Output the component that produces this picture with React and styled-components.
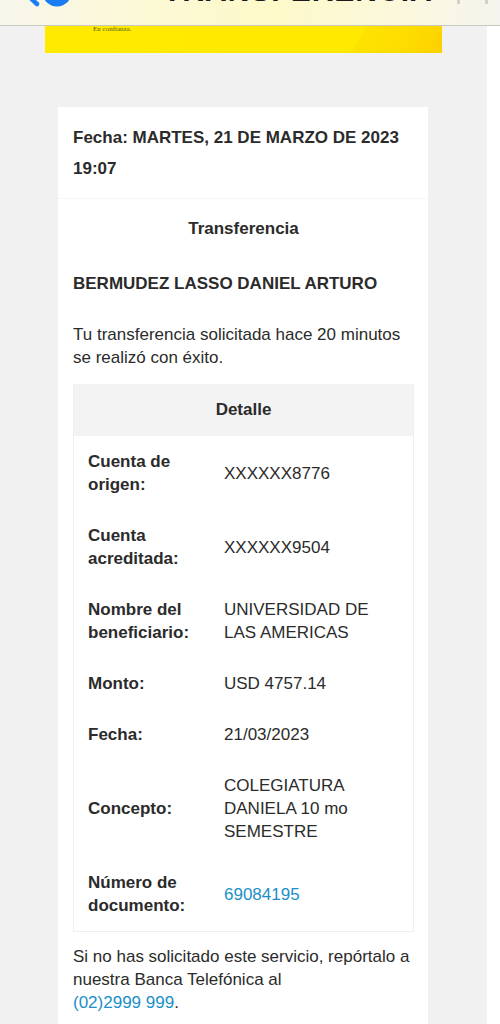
import React from "react";
import styled, { createGlobalStyle } from "styled-components";

const GlobalStyle = createGlobalStyle`
  html, body {
    margin: 0;
    padding: 0;
    background: #ffffff;
  }
  body {
    font-family: "Liberation Sans", Arial, Helvetica, sans-serif;
    color: #2b2b2b;
  }
`;

const details = [
  { label: "Cuenta de origen:", value: "XXXXXX8776" },
  { label: "Cuenta acreditada:", value: "XXXXXX9504" },
  { label: "Nombre del beneficiario:", value: "UNIVERSIDAD DE LAS AMERICAS" },
  { label: "Monto:", value: "USD 4757.14" },
  { label: "Fecha:", value: "21/03/2023" },
  { label: "Concepto:", value: "COLEGIATURA DANIELA 10 mo SEMESTRE" },
  { label: "Número de documento:", value: "69084195", link: true },
];

const App = () => (
  <>
    <GlobalStyle />
    <TopBar>
      <BackIcon width="70" height="40" viewBox="0 0 70 40">
        <path
          d="M40 2 L24 17 L37 29"
          fill="none"
          stroke="#1a7cf2"
          strokeWidth="4.5"
          strokeLinecap="round"
          strokeLinejoin="round"
        />
        <circle cx="57" cy="17" r="14.5" fill="#1a7cf2" />
      </BackIcon>
      <Title>TRANSFERENCIA</Title>
      <TopDots>
        <span />
        <span />
      </TopDots>
    </TopBar>
    <Layout>
      <Main>
        <Banner>
          <Slogan>En confianza.</Slogan>
        </Banner>
        <Card>
          <DateBlock>
            Fecha: MARTES, 21 DE MARZO DE 2023
            <br />
            19:07
          </DateBlock>
          <Content>
            <SectionTitle>Transferencia</SectionTitle>
            <Name>BERMUDEZ LASSO DANIEL ARTURO</Name>
            <Paragraph>
              Tu transferencia solicitada hace 20 minutos se realizó con éxito.
            </Paragraph>
            <DetailTable>
              <DetailHeader>Detalle</DetailHeader>
              {details.map((d) => (
                <DetailRow key={d.label}>
                  <DetailLabel>{d.label}</DetailLabel>
                  <DetailValue $link={d.link}>{d.value}</DetailValue>
                </DetailRow>
              ))}
            </DetailTable>
            <Footer>
              Si no has solicitado este servicio, repórtalo a nuestra Banca
              Telefónica al
              <br />
              <Link>(02)2999 999</Link>.
            </Footer>
          </Content>
        </Card>
      </Main>
    </Layout>
  </>
);

const TopBar = styled.header`
  height: 25px;
  width: 500px;
  display: flex;
  align-items: flex-end;
  overflow: hidden;
  background: linear-gradient(
    90deg,
    #f7f6ec 0%,
    #fbf8d8 25%,
    #fdf9c9 55%,
    #fbf8dc 80%,
    #f5f4ee 100%
  );
  border-bottom: 1px solid #c9c8bc;
  box-sizing: content-box;
`;

const BackIcon = styled.svg`
  flex: none;
  margin-bottom: 10px;
`;

const Title = styled.div`
  flex: none;
  margin-left: 93px;
  margin-bottom: 19px;
  font-size: 30px;
  line-height: 30px;
  font-weight: 700;
  letter-spacing: 1px;
  color: #1a1a1a;
`;

const TopDots = styled.div`
  display: flex;
  align-items: flex-end;
  gap: 25px;
  margin-left: 24px;
  margin-bottom: 21px;
  span {
    width: 3px;
    height: 4px;
    border-radius: 1px;
    background: #cfcec6;
  }
`;

const Layout = styled.div`
  display: flex;
`;

const Main = styled.main`
  width: 487px;
  min-height: 998px;
  background: #f1f1f1;
`;

const Banner = styled.div`
  margin: 0 45px;
  height: 27px;
  background: linear-gradient(
    118deg,
    #ffea00 0%,
    #ffe900 78%,
    #fde300 78%,
    #fedc00 90%,
    #fdd000 100%
  );
`;

const Slogan = styled.div`
  padding: 0 0 0 48px;
  font-family: "Liberation Serif", "Times New Roman", serif;
  font-size: 7px;
  line-height: 7px;
  color: #5d5a1c;
`;

const Card = styled.section`
  margin: 54px 0 0 58px;
  width: 370px;
  background: #ffffff;
`;

const DateBlock = styled.div`
  padding: 15px 15px 14px;
  font-size: 17px;
  line-height: 31px;
  font-weight: 700;
  border-bottom: 1px solid #f6f6f6;
`;

const Content = styled.div`
  padding: 0 14px 0 15px;
  display: flex;
  flex-direction: column;
`;

const SectionTitle = styled.div`
  margin-top: 18px;
  text-align: center;
  font-size: 17px;
  line-height: 23px;
  font-weight: 700;
`;

const Name = styled.div`
  margin-top: 32px;
  font-size: 17px;
  line-height: 23px;
  font-weight: 700;
`;

const Paragraph = styled.p`
  margin: 28px 0 0;
  font-size: 17px;
  line-height: 23px;
`;

const DetailTable = styled.div`
  margin-top: 15px;
  border: 1px solid #efefef;
  border-top: none;
`;

const DetailHeader = styled.div`
  height: 52px;
  display: flex;
  align-items: center;
  justify-content: center;
  background: #f3f3f3;
  font-size: 17px;
  font-weight: 700;
`;

const DetailRow = styled.div`
  display: grid;
  grid-template-columns: 150px 1fr;
  align-items: center;
  padding: 14px 0;
  font-size: 17px;
  line-height: 23px;
`;

const DetailLabel = styled.div`
  padding: 0 10px 0 14px;
  font-weight: 700;
`;

const DetailValue = styled.div`
  padding-right: 14px;
  color: ${(p) => (p.$link ? "#1b8fc7" : "#2b2b2b")};
`;

const Footer = styled.p`
  margin: 13px 0 0;
  font-size: 17px;
  line-height: 23px;
  padding-bottom: 30px;
`;

const Link = styled.span`
  color: #1b8fc7;
`;

export default App;
